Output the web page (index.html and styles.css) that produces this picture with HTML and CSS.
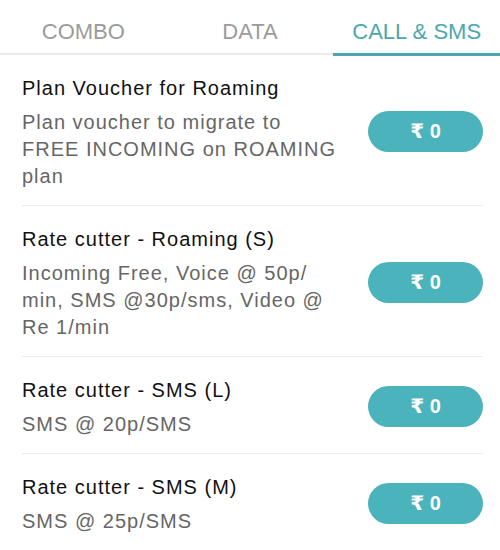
FILE: index.html
```html
<!DOCTYPE html>
<html>
<head>
<meta charset="utf-8">
<link rel="stylesheet" href="styles.css">
</head>
<body>
<nav class="tabs">
  <div class="tab">COMBO</div>
  <div class="tab">DATA</div>
  <div class="tab active">CALL &amp; SMS</div>
</nav>
<ul class="plans">
  <li class="plan">
    <div class="info">
      <div class="title">Plan Voucher for Roaming</div>
      <div class="desc">Plan voucher to migrate to FREE INCOMING on ROAMING plan</div>
    </div>
    <button class="price">₹ 0</button>
  </li>
  <li class="plan">
    <div class="info">
      <div class="title">Rate cutter - Roaming (S)</div>
      <div class="desc">Incoming Free, Voice @ 50p/ min, SMS @30p/sms, Video @ Re 1/min</div>
    </div>
    <button class="price">₹ 0</button>
  </li>
  <li class="plan">
    <div class="info">
      <div class="title">Rate cutter - SMS (L)</div>
      <div class="desc">SMS @ 20p/SMS</div>
    </div>
    <button class="price">₹ 0</button>
  </li>
  <li class="plan">
    <div class="info">
      <div class="title">Rate cutter - SMS (M)</div>
      <div class="desc">SMS @ 25p/SMS</div>
    </div>
    <button class="price">₹ 0</button>
  </li>
</ul>
</body>
</html>
```
FILE: styles.css
```css
* { box-sizing: border-box; }
html, body {
  margin: 0;
  padding: 0;
  background: #fff;
  font-family: "Liberation Sans", Arial, "DejaVu Sans", sans-serif;
}
.tabs {
  display: flex;
  align-items: flex-start;
}
.tab {
  flex: 1;
  text-align: center;
  font-size: 22px;
  line-height: 26px;
  color: #9b9b9b;
  padding: 19px 0 8px;
  border-bottom: 2px solid #ebebeb;
}
.tab.active {
  color: #4aa8ae;
  border-bottom: 3px solid #4aa8ae;
}
.plans {
  list-style: none;
  margin: -1px 0 0;
  padding: 0;
}
.plan {
  display: flex;
  align-items: center;
  margin: 0 17px 0 22px;
  padding: 21px 0 15px;
  border-bottom: 1px solid #ececec;
}
.info {
  width: 322px;
}
.title {
  font-size: 20px;
  line-height: 25px;
  letter-spacing: 1px;
  color: #111;
}
.desc {
  margin-top: 8px;
  font-size: 20px;
  line-height: 27px;
  letter-spacing: 1px;
  color: #666;
}
.price {
  margin: 0 0 4px auto;
  width: 115px;
  height: 41px;
  border: none;
  border-radius: 21px;
  background: #4bb3bc;
  color: #fff;
  font-family: "Liberation Sans", Arial, "DejaVu Sans", sans-serif;
  font-size: 20px;
  font-weight: bold;
  padding: 0;
}
```
